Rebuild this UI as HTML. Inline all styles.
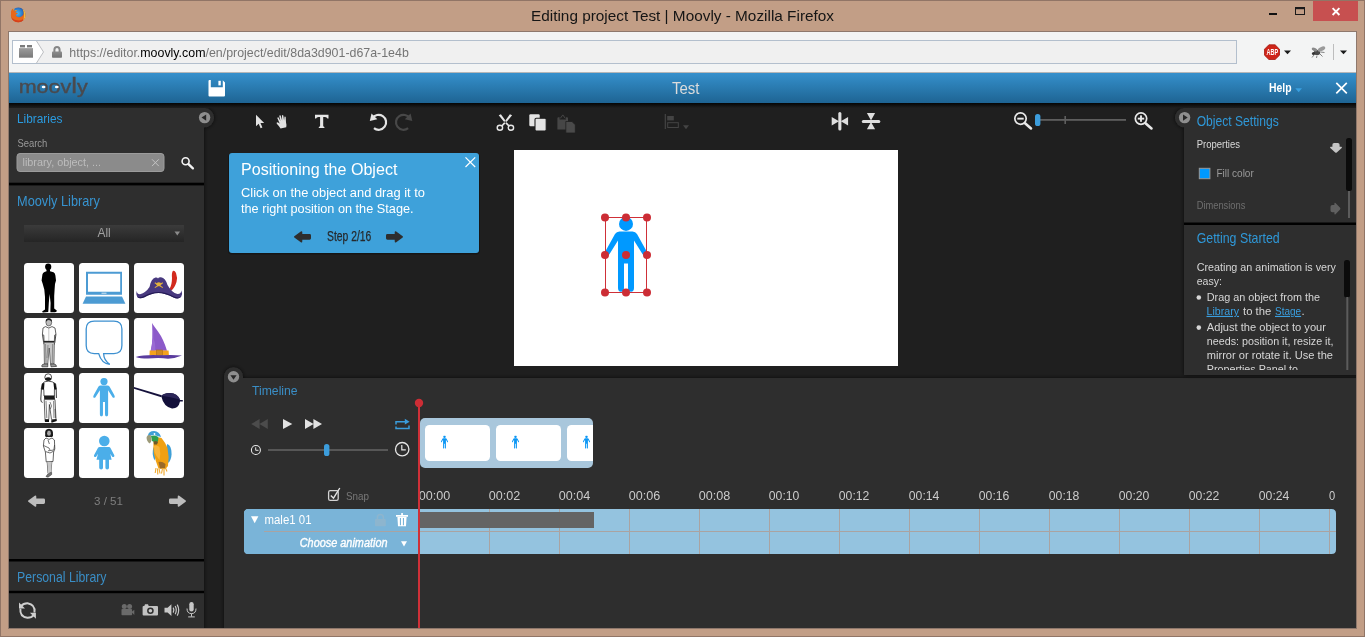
<!DOCTYPE html>
<html lang="en"><head><meta charset="utf-8"><title>Editing project Test | Moovly - Mozilla Firefox</title>
<style>
html,body{margin:0;padding:0;background:#c29e86;overflow:hidden}
svg{display:block;will-change:transform;font-family:'Liberation Sans', Arial, sans-serif}
text{white-space:pre}
</style></head><body>
<svg width="1365" height="637" viewBox="0 0 1365 637">
<defs>
<linearGradient id="gHead" x1="0" y1="0" x2="0" y2="1"><stop offset="0" stop-color="#3590cc"/><stop offset="1" stop-color="#1e6493"/></linearGradient>
<linearGradient id="gShade" x1="0" y1="0" x2="0" y2="1"><stop offset="0" stop-color="#050505"/><stop offset="1" stop-color="#1f1f1f"/></linearGradient>
<linearGradient id="gSel" x1="0" y1="0" x2="0" y2="1"><stop offset="0" stop-color="#3b3b3b"/><stop offset="1" stop-color="#252525"/></linearGradient>
<linearGradient id="gLego" x1="0" y1="0" x2="0" y2="1"><stop offset="0" stop-color="#9c9c9c"/><stop offset="1" stop-color="#787878"/></linearGradient>
<linearGradient id="gLock" x1="0" y1="0" x2="0" y2="1"><stop offset="0" stop-color="#8c8c8c"/><stop offset="1" stop-color="#737373"/></linearGradient>
<radialGradient id="gFx" cx="0.45" cy="0.4" r="0.6"><stop offset="0" stop-color="#49b6f0"/><stop offset="0.600" stop-color="#2a72c4"/><stop offset="1" stop-color="#17287c"/></radialGradient>
<filter id="sh" x="-10%" y="-10%" width="120%" height="120%"><feGaussianBlur in="SourceAlpha" stdDeviation="2.200"/><feComponentTransfer><feFuncA type="linear" slope="0.700"/></feComponentTransfer><feMerge><feMergeNode/><feMergeNode in="SourceGraphic"/></feMerge></filter>
<clipPath id="cMain"><rect x="9" y="103" width="1347" height="525"/></clipPath>
<clipPath id="cStrip"><rect x="420" y="418" width="173" height="50" rx="5"/></clipPath>
<clipPath id="cGS"><rect x="1184" y="225" width="172" height="145.100"/></clipPath>
<symbol id="man" viewBox="0 0 42 75"><circle cx="21" cy="6.8" r="7"/><path d="M14.5 14.5 H27.5 Q30.5 14.5 32 17 L42 35 Q42.6 37.4 40.8 38.2 Q39 39 37.6 37.2 L29 23.5 V71 Q29 74.6 26 74.6 Q23 74.6 23 71 V46.5 H19 V71 Q19 74.6 16 74.6 Q13 74.6 13 71 V23.5 L4.4 37.2 Q3 39 1.2 38.2 Q-0.6 37.4 0 35 L10 17 Q11.500 14.500 14.500 14.500Z"/></symbol>
</defs>
<rect x="0" y="0" width="1365" height="637" fill="#c29e86"/>
<rect x="0.5" y="0.5" width="1364" height="636" fill="none" stroke="#917566"/>
<rect x="8.500" y="31.500" width="1348" height="597" fill="none" stroke="#8e786c"/>
<text x="531" y="21" font-size="15" fill="#151515" textLength="303" lengthAdjust="spacingAndGlyphs" >Editing project Test | Moovly - Mozilla Firefox</text>
<g><circle cx="18.300" cy="14.800" r="7.200" fill="url(#gFx)"/><path d="M11 13.500 Q10.600 10 13.200 8.600 Q13 10.200 14.200 10.800 Q15.600 9.800 17 10.400 Q15.400 11.400 15.600 12.800 Q17.400 12.600 18 13.600 Q16 14.200 15.800 15.600 Q17 17.600 19.800 17.200 Q22.600 16.600 23.600 14 Q24.200 11.600 23.400 10 Q25.800 12.600 25.200 16.200 Q24.200 21.200 19 22.200 Q13.600 22.600 11.400 18 Q10.600 15.800 11 13.500Z" fill="#e8681a"/><path d="M11.400 17.800 Q13.400 22.400 18.800 22.200 Q24 21.400 25.200 16.400 Q23.600 20 19.400 20.400 Q14.600 20.800 11.400 17.800Z" fill="#d6401c"/><path d="M22.600 8.800 Q26.600 12 25.300 17.200 Q24.500 19.600 23 20.600 Q25.200 15 22.600 8.800Z" fill="#f6b93a"/><path d="M12.800 9.600 L14.400 9.300 L14.200 10.800Z M15.200 10 L17 10.300 L15.700 11.200Z" fill="#f6b02c"/></g>
<rect x="1269" y="13" width="8" height="2" fill="#111"/>
<rect x="1295.500" y="8.500" width="9" height="6" fill="none" stroke="#1a1a1a"/><rect x="1295" y="7" width="10" height="2.200" fill="#1a1a1a"/>
<rect x="1313" y="1" width="45" height="20" fill="#c75050"/>
<path d="M1332.600 8.200 L1339.400 15 M1339.400 8.200 L1332.600 15" stroke="#fff" stroke-width="1.900" fill="none"/>
<rect x="9" y="32" width="1347" height="41" fill="#f3f4f4"/>
<rect x="12.500" y="40.500" width="1224" height="23" fill="#f0f0f0" stroke="#b3bfcd"/>
<path d="M13 41 H36.500 L43.500 52 L36.500 63 H13Z" fill="#fefefe"/><path d="M36.500 41 L43.500 52 L36.500 63" fill="none" stroke="#bdbfc2"/>
<rect x="19" y="48.100" width="14" height="9.600" fill="url(#gLego)"/><rect x="20" y="45" width="5" height="2" fill="#7a7a7a"/><rect x="27" y="45" width="5" height="2" fill="#7a7a7a"/><rect x="20" y="47" width="5" height="1.100" fill="#c4c4c4"/><rect x="27" y="47" width="5" height="1.100" fill="#c4c4c4"/>
<path d="M54.400 52 V49.800 Q54.400 47 57 47 Q59.600 47 59.600 49.800 V52" fill="none" stroke="#868686" stroke-width="2"/><rect x="52" y="51.600" width="10" height="6.200" rx="0.800" fill="url(#gLock)"/>
<text x="69.300" y="56.600" font-size="13" fill="#757575" textLength="339.500" lengthAdjust="spacingAndGlyphs">https://editor.<tspan fill="#000">moovly.com</tspan>/en/project/edit/8da3d901-d67a-1e4b</text>
<path d="M1268.900 44.800 H1275.100 L1279.500 49.200 V55.200 L1275.100 59.500 H1268.900 L1264.500 55.200 V49.200Z" fill="#cf2519" stroke="#a31a12" stroke-width="0.800" stroke-linejoin="round"/>
<text x="1266.6" y="54.8" font-size="8.6" fill="#fff" textLength="11.6" lengthAdjust="spacingAndGlyphs" font-weight="bold" >ABP</text>
<path d="M1284 50.500 H1291 L1287.500 54.300Z" fill="#1a1a1a"/>
<g fill="#4a4a4a"><ellipse cx="1317" cy="52.500" rx="3.200" ry="2.600"/><ellipse cx="1321.500" cy="49" rx="4" ry="2" transform="rotate(-25 1321.500 49)" fill="#9a9a9a"/><ellipse cx="1314.500" cy="49.500" rx="3" ry="1.600" transform="rotate(25 1314.500 49.500)" fill="#8a8a8a"/><circle cx="1313.500" cy="53.500" r="1.600" fill="#333"/><path d="M1314 55 L1312 57.500 M1317 55.500 L1316.500 58 M1320 54 L1322.500 56.500 M1320.500 52 L1324.500 52.500" stroke="#666" stroke-width="0.800" fill="none"/></g>
<rect x="1333" y="44" width="1" height="16" fill="#bdbdbd"/>
<path d="M1340 50.500 H1347 L1343.500 54.300Z" fill="#1a1a1a"/>
<rect x="9" y="72" width="1347" height="1" fill="#b4b6b8"/>
<rect x="9" y="73" width="1347" height="30" fill="url(#gHead)"/>
<text x="18.700" y="92.600" font-size="18.500" fill="#4a4a4e" stroke="#4a4a4e" stroke-width="0.400" textLength="69" lengthAdjust="spacingAndGlyphs">moov<tspan font-size="22">l</tspan>y</text>
<ellipse cx="43.600" cy="87" rx="1.900" ry="1.300" fill="#fff"/><ellipse cx="56.800" cy="87" rx="1.900" ry="1.300" fill="#fff"/>
<path d="M209.500 80 H222.500 L225 82.500 V95.600 Q225 96.600 224 96.600 H209.500 Q208.500 96.600 208.500 95.600 V81 Q208.500 80 209.500 80Z M210.800 80 V87.200 H222.800 V80Z" fill="#fff" fill-rule="evenodd"/><rect x="218.400" y="80.800" width="2.400" height="4.600" fill="#fff"/>
<text x="672" y="93.8" font-size="16.8" fill="#dcdcdc" textLength="27.5" lengthAdjust="spacingAndGlyphs" >Test</text>
<text x="1269" y="92.3" font-size="13" fill="#fff" textLength="22.5" lengthAdjust="spacingAndGlyphs" font-weight="bold" >Help</text>
<path d="M1295.300 88.200 H1302 L1298.650 92.200Z" fill="#3aa0e0"/>
<path d="M1336.300 82.800 L1346.800 93.300 M1346.800 82.800 L1336.300 93.300" stroke="#fff" stroke-width="1.700" fill="none"/>
<rect x="9" y="103" width="1347" height="525" fill="#1f1f1f"/>
<g clip-path="url(#cMain)">
<g filter="url(#sh)"><rect x="224" y="378" width="1140" height="260" fill="#2f2f2f"/><circle cx="233.500" cy="376.900" r="9.600" fill="#2f2f2f"/></g>
<g filter="url(#sh)"><rect x="1184" y="100" width="180" height="275" fill="#2f2f2f"/><circle cx="1184.500" cy="117.700" r="9.600" fill="#2f2f2f"/></g>
<g filter="url(#sh)"><rect x="0" y="100" width="204" height="540" fill="#2f2f2f"/><circle cx="204.500" cy="117.700" r="9.600" fill="#2f2f2f"/></g>
</g>
<rect x="9" y="103" width="1347" height="5" fill="url(#gShade)"/>
<circle cx="204.600" cy="117.600" r="5.700" fill="#8e8e8e"/><path d="M206.200 114.500 V120.700 L201.500 117.600Z" fill="#262626"/>
<text x="17" y="123.2" font-size="13.4" fill="#2a9be0" textLength="45.4" lengthAdjust="spacingAndGlyphs" >Libraries</text>
<text x="17.4" y="147" font-size="11.5" fill="#9a9a9a" textLength="29.9" lengthAdjust="spacingAndGlyphs" >Search</text>
<rect x="17" y="153.500" width="147" height="18" rx="3" fill="#8b8b8b" stroke="#9c9c9c"/>
<text x="22.5" y="166" font-size="11.5" fill="#bcbcbc" textLength="78.5" lengthAdjust="spacingAndGlyphs" >library, object, ...</text>
<path d="M152 159.300 L158.800 166.100 M158.800 159.300 L152 166.100" stroke="#c4c4c4" stroke-width="1" fill="none"/>
<circle cx="185.600" cy="161.300" r="3.500" fill="none" stroke="#f4f4f4" stroke-width="1.600"/><path d="M188.500 164.200 L192.900 168.400" stroke="#f4f4f4" stroke-width="2.300" stroke-linecap="round"/>
<rect x="9" y="182.700" width="195" height="2.700" fill="#000"/>
<text x="17" y="206.3" font-size="14.2" fill="#3793cf" textLength="83" lengthAdjust="spacingAndGlyphs" >Moovly Library</text>
<rect x="24" y="225" width="160" height="17" fill="url(#gSel)"/>
<text x="97.5" y="237" font-size="13.2" fill="#a2a2a2" textLength="13.2" lengthAdjust="spacingAndGlyphs" >All</text>
<path d="M174.500 231.500 H180 L177.250 235.600Z" fill="#8c8c8c"/>
<g transform="translate(24 263)"><rect x="0" y="0" width="50" height="50" rx="3.500" fill="#fff"/><ellipse cx="24.200" cy="3.800" rx="3.100" ry="3.400" fill="#000"/><path d="M22.500 6.500 H26 V8.300 L29.500 9.200 Q31.200 10 31.400 12.500 L32 17.500 L31 21 L30.600 26.500 L30.200 33 L30.200 45.500 L32.800 47.600 Q33 49.200 31 49.200 H26.400 V47 L26.600 40 L25.600 31 L24.800 40 L24.400 47 L24.200 49 L19 49.600 Q17.600 49.200 18.400 48.200 L21 46.400 L21 34 L20.300 26.500 L18.600 20.500 L17.600 17.500 L18.400 11.500 Q18.800 9.600 20.500 9 L22.500 8.300Z" fill="#000"/></g>
<g transform="translate(79 263)"><rect x="0" y="0" width="50" height="50" rx="3.500" fill="#fff"/><path d="M7 8.700 H43 V31.800 H7Z M9 10.700 V28.800 H41.200 V10.700Z" fill="#4c9bd3" fill-rule="evenodd"/><rect x="22.500" y="29.700" width="5" height="1" fill="#d6e8f6"/><path d="M7 33.500 H43 L46.400 40.700 H3.600Z" fill="#4c9bd3"/></g>
<g transform="translate(134 263)"><rect x="0" y="0" width="50" height="50" rx="3.500" fill="#fff"/><path d="M35.400 26 Q38 22 38 15 Q37.500 10 38.800 8 Q40.500 7 42 10 Q43.800 15 42.500 19 Q40.500 25 37.500 27.500Z" fill="#d22a1e"/><path d="M2.800 27.500 Q2.600 31 6 31.300 Q12 29.500 15.500 24 Q17 15.500 21.500 14.500 Q23.500 14.200 24 15.600 Q24.600 14 27 14.200 Q31.500 15 33.500 22 Q37.500 29.500 43.500 31 Q47.200 31.200 47.500 27.300 Q48.800 31 47.200 33.800 Q44.500 36.800 39.500 34.600 Q31 30 24.500 30 Q17 30.200 10.500 34.200 Q5.500 36.500 3.200 34 Q1.600 31 2.800 27.500Z" fill="#48397f"/><path d="M10.500 34.200 Q17 30.200 24.500 30 Q31 30 39.500 34.600 Q44.500 36.800 47.200 33.800 Q44.500 35.300 40 33.400 Q31.500 29 24.500 29 Q17 29.200 10 33 Q6 35 3.200 34 Q5.500 36.500 10.500 34.200Z" fill="#241a55"/><ellipse cx="24.800" cy="21.200" rx="2.400" ry="2" fill="#e2b23c"/><path d="M20.800 19.800 L28.800 24.600 M28.800 19.800 L20.800 24.600" stroke="#e2b23c" stroke-width="1.100"/></g>
<g transform="translate(24 318)"><rect x="0" y="0" width="50" height="50" rx="3.500" fill="#fff"/><ellipse cx="24.800" cy="4.300" rx="2.900" ry="3.700" fill="#bdbdbd" stroke="#333" stroke-width="0.600"/><path d="M21.800 3.800 Q21.400 0.300 24.800 0.300 Q28.200 0.300 27.800 3.800 Q26.600 2.100 24.800 2.100 Q23 2.100 21.800 3.800Z" fill="#1c1c1c"/><path d="M21.500 8.600 L24.800 10 L28 8.600 L31 10 L32 16.500 L30.600 17.200 L30.400 23.300 H20 L19.800 17.200 L18.400 16.500 L19 10Z" fill="#fdfdfd" stroke="#222" stroke-width="0.700"/><path d="M18.500 16.500 L19.600 24.500 L20.600 27 M31.900 16.500 L30.800 24.500 L29.800 27" fill="none" stroke="#444" stroke-width="1"/><path d="M24.800 10 V23" stroke="#777" stroke-width="0.400"/><rect x="20" y="23" width="10.400" height="1.400" fill="#222"/><path d="M20 24.400 H30.400 L30 46 H26.600 L25.200 30 L23.800 46 H20.400Z" fill="#c6c6c6" stroke="#333" stroke-width="0.600"/><path d="M21.500 26 L22 45 M28.600 26 L28.300 45 M24 27 L23 40" stroke="#555" stroke-width="0.500" fill="none"/><path d="M17.600 48 Q18 46 20.400 46 H23.800 V48.800 H18Z M26.600 46 H30 Q32.400 46.400 32.600 48.400 L27 48.800Z" fill="#999" stroke="#222" stroke-width="0.600"/></g>
<g transform="translate(79 318)"><rect x="0" y="0" width="50" height="50" rx="3.500" fill="#fff"/><path d="M15.200 3.100 H34.900 Q42.900 3.100 42.900 11.100 V27.600 Q42.900 35.600 34.900 35.600 H24.600 Q24.800 42.500 30.800 46.400 Q22.500 45.500 19.700 35.600 H15.200 Q7.200 35.600 7.200 27.600 V11.100 Q7.200 3.100 15.200 3.100Z" fill="none" stroke="#3d90d0" stroke-width="1.300"/></g>
<g transform="translate(134 318)"><rect x="0" y="0" width="50" height="50" rx="3.500" fill="#fff"/><path d="M18 5.100 Q19 7 24 13.500 Q29.500 21 33 32.800 H16.700 Q19.600 21 18 5.100Z" fill="#8c5ac9"/><path d="M18 5.100 Q20 14 19.500 21 Q22 26 21 32.800 H16.700 Q19.600 21 18 5.100Z" fill="#9a6ad4"/><path d="M15.700 32.600 H34.600 L34.900 37.400 H15.500Z" fill="#f4a21c"/><rect x="22.500" y="32" width="6" height="5.600" fill="#d08a22" stroke="#b06e18" stroke-width="0.600"/><path d="M1.700 39 Q10 36.600 25 37.200 Q40 36.600 48 37.400 Q42 40 34 40.700 Q25 39.400 14 40.600 Q6 40.600 1.700 39Z" fill="#5a3c9e"/></g>
<g transform="translate(24 373)"><rect x="0" y="0" width="50" height="50" rx="3.500" fill="#fff"/><circle cx="24.200" cy="4.200" r="3.400" fill="#fff" stroke="#222" stroke-width="0.800"/><path d="M21 5.400 Q24.200 3 27.400 5.400 L27 7 Q24.200 8.400 21.400 7Z" fill="#1a1a1a"/><path d="M20.500 8.800 Q24.200 7.600 28.200 8.800 L31.600 10.800 L32.400 16 L30.400 16.400 L30.400 23 H20 L19.800 16.400 L17.200 16 L18.200 10.800Z" fill="#fff" stroke="#111" stroke-width="0.700"/><path d="M18.200 10.800 L20.500 9.600 L20 16.400 L17.200 16Z M31.600 10.800 L29.400 9.600 L30.200 16.400 L32.400 16Z" fill="#111"/><path d="M17.400 16 L16.800 26 Q16.600 29.400 18.600 29.400 M32.200 16 L32.400 25" fill="none" stroke="#222" stroke-width="0.900"/><path d="M20 22.800 H30.600 L31 26.600 H20.200Z" fill="#1a1a1a"/><path d="M20.200 26.600 H31 L32 46.500 H27.500 L25.400 31.500 L24.800 46.500 H21Z" fill="#fafafa" stroke="#222" stroke-width="0.700"/><path d="M22 28 L22.800 45 M26 29 L27.500 33 L26.400 36 M29.600 28 L30 45 M31 36 L31.600 45" stroke="#333" stroke-width="0.600" fill="none"/><path d="M20.600 46.500 H25 V49 H21Z M27 47.500 L32.600 46 L32.800 48 L27.600 49.800Z" fill="#111"/></g>
<g transform="translate(79 373)"><rect x="0" y="0" width="50" height="50" rx="3.500" fill="#fff"/><use href="#man" x="14.200" y="5.100" width="21.600" height="38.570" fill="#4baee9"/></g>
<g transform="translate(134 373)"><rect x="0" y="0" width="50" height="50" rx="3.500" fill="#fff"/><path d="M0 14 L27.800 22.300 L27.400 24.300 L0 15.800Z" fill="#15113c"/><path d="M27.300 23.200 Q28.500 20.400 36 20 Q43.500 20.400 46.200 27 L48.800 27 V28.600 L46 28.600 Q44.500 35.800 38 35.600 Q29.500 33.500 27.300 23.200Z" fill="#13103a"/><path d="M27.600 22.800 Q29 20.400 36 20 Q43.500 20.400 46 26.600 Q36 24 27.600 22.800Z" fill="#2c2658"/></g>
<g transform="translate(24 428)"><rect x="0" y="0" width="50" height="50" rx="3.500" fill="#fff"/><path d="M21.200 6.500 Q20.400 1 25 0.800 Q29.400 1 29 6.500 Q29.600 8.500 27.800 9 L22.200 9 Q20.400 8.600 21.200 6.500Z" fill="#1b1b1b"/><ellipse cx="25" cy="5.200" rx="1.900" ry="2.600" fill="#a8a8a8"/><path d="M22 10 L25 11.400 L28 10 L30.400 12 L30.800 21 L29.600 24 L29 33.500 L22.200 33.800 L21.400 24 L19.400 18 L20 12Z" fill="#fff" stroke="#222" stroke-width="0.700"/><path d="M19.600 17.500 L25 20 L26 22 M30.600 17 L29.800 22 L24 22.800 M21.600 23.600 L26 25 L29.600 23.200 M24 12 L25.400 16" stroke="#333" stroke-width="0.700" fill="none"/><path d="M23.200 33.800 L24 45.500 M27.800 33.600 L27 44 M25.600 34 L25.600 44" stroke="#444" stroke-width="0.800" fill="none"/><path d="M23.400 34 H27.600 L27 45 H24.200Z" fill="#c8c8c8"/><path d="M22 48.500 Q23 46.400 25.600 45 L27.600 44.200 L27.600 46.600 L24 49.200Z" fill="#777" stroke="#222" stroke-width="0.500"/></g>
<g transform="translate(79 428)"><rect x="0" y="0" width="50" height="50" rx="3.500" fill="#fff"/><circle cx="25.300" cy="13" r="5.300" fill="#4baee9"/><path d="M20.600 18.900 H30 Q31 19 31.500 20 L35.300 27.300 Q35.700 28.500 34.700 29 Q33.700 29.400 33 28.400 L31.300 25.800 L32.600 31.800 H30 V39.700 Q30 41.500 28.200 41.500 Q26.400 41.500 26.400 39.700 V31.800 H24 V39.700 Q24 41.500 22.200 41.500 Q20.200 41.500 20.200 39.700 V31.800 H17.500 L19 25.800 L17.300 28.400 Q16.600 29.400 15.600 29 Q14.600 28.500 15 27.300 L18.900 20 Q19.500 19 20.600 18.900Z" fill="#4baee9"/></g>
<g transform="translate(134 428)"><rect x="0" y="0" width="50" height="50" rx="3.500" fill="#fff"/><path d="M33 16 Q37.500 17 37.600 26 Q37.200 32 34.500 35 L32 28Z" fill="#3f9fd6"/><path d="M19.500 19 Q17.400 26 20.500 32.500 L22.500 26Z" fill="#3f9fd6"/><path d="M13.800 8 Q14.500 3 20 3 Q25.500 3.600 27 9 L20 7Z" fill="#3f9fd6"/><path d="M19.500 14 Q24 8 27.500 10 Q31 14 33.500 20 Q35.500 29 34 38 L31.500 41 L24.500 40.500 Q21.500 33 20 26 Q19 19 19.500 14Z" fill="#f0a012"/><path d="M20 18 Q23 16.500 25.500 19 Q27 26 25.500 32 Q22 28 20.500 24Z" fill="#f7b43a"/><path d="M24.500 34 Q28 33 31.500 36 L31 40 L26 40.600Z" fill="#9a6a28"/><path d="M17 8 Q21 6.500 24.500 9 L24 13.500 Q20.500 15 18 13Z" fill="#2f9e4e"/><path d="M19.500 13.500 Q22 12.500 24 14 L23 16.600 L20 16.400Z" fill="#6b5a2a"/><path d="M12.600 9 Q13.200 6.600 16.600 7 L17.600 12 Q17 15 15.600 15.400 Q12.400 13.500 12.600 9Z" fill="#9c9a78"/><circle cx="20.500" cy="6" r="0.900" fill="#fff"/><path d="M22 40 L21.200 45 M23.500 40.500 L23.800 46.500 M25 40.500 L26 45.500 M28.500 40.500 L27.500 45.500 M30 40.500 L30 47.500 M31.500 40 L33 43.500" stroke="#f0a82a" stroke-width="1.100" fill="none"/></g>
<path transform="translate(28 495.5) scale(1.0)" d="M0.300 5.100 L6.800 0.300 Q8.300 -0.400 8.300 1.300 V2.900 H15.600 Q17 2.900 17 4.300 V7.100 Q17 8.500 15.600 8.500 H8.300 V10.100 Q8.300 11.800 6.800 11.100 L0.300 6.300 Q-0.300 5.700 0.300 5.100Z" fill="#bdbdbd"/>
<path transform="translate(186.0 495.5) scale(-1.0 1.0)" d="M0.300 5.100 L6.800 0.300 Q8.300 -0.400 8.300 1.300 V2.900 H15.600 Q17 2.900 17 4.300 V7.100 Q17 8.500 15.600 8.500 H8.300 V10.100 Q8.300 11.800 6.800 11.100 L0.300 6.300 Q-0.300 5.700 0.300 5.100Z" fill="#bdbdbd"/>
<text x="94" y="504.7" font-size="11" fill="#7e7e7e" textLength="29" lengthAdjust="spacingAndGlyphs" >3 / 51</text>
<rect x="9" y="559" width="195" height="2.500" fill="#000"/>
<text x="17" y="582" font-size="14" fill="#3a8ec6" textLength="89.5" lengthAdjust="spacingAndGlyphs" >Personal Library</text>
<rect x="9" y="590.800" width="195" height="2.400" fill="#000"/>
<g transform="translate(55 0) scale(-1 1)"><g fill="none" stroke="#cfcfcf" stroke-width="1.900"><path d="M20.500 612.500 Q19.600 604.500 27.500 603.300 Q31.500 603.200 34 606.200"/><path d="M34.600 608.600 Q35.500 616.600 27.600 617.800 Q23.600 617.900 21.100 614.900"/></g><path d="M36 602.400 V608.400 H30Z M19.100 618.700 V612.700 H25.100Z" fill="#cfcfcf"/></g>
<g fill="#6a6a6a"><circle cx="124.300" cy="606.600" r="2.500"/><circle cx="129.600" cy="606.600" r="2.500"/><rect x="121.500" y="609" width="10.600" height="6.300" rx="0.800"/><path d="M131.500 612 L134.300 609.700 V615 Z"/></g>
<path d="M144.300 606 L145 604.200 H148 L148.700 606 H157 Q158 606 158 607 V614.600 Q158 615.600 157 615.600 H143.600 Q142.600 615.600 142.600 614.600 V607 Q142.600 606 143.600 606Z" fill="#c2c2c2"/><circle cx="150.400" cy="610.800" r="3.300" fill="#2f2f2f"/><circle cx="150.400" cy="610.800" r="1.800" fill="#c8c8c8"/>
<path d="M164.500 607.700 H167.600 L171.400 604.200 V616 L167.600 612.500 H164.500Z" fill="#c8c8c8"/><path d="M173.200 607.600 Q174.600 610.100 173.200 612.600 M175.200 606 Q177.400 610.100 175.200 614.200 M177.200 604.600 Q180.200 610.100 177.200 615.600" fill="none" stroke="#c8c8c8" stroke-width="1.200"/>
<rect x="189.300" y="602" width="4.400" height="9.500" rx="2.200" fill="#c8c8c8"/><path d="M187 608.500 Q187 613.600 191.500 613.600 Q196 613.600 196 608.500 M191.500 613.600 V616.600 M188.200 616.900 H194.800" fill="none" stroke="#c8c8c8" stroke-width="1"/>
<path d="M256 114.800 V126.300 L258.700 123.800 L260.600 128.300 L262.400 127.500 L260.500 123.100 H264.200Z" fill="#e2e2e2"/>
<path transform="rotate(-13 281.500 122) translate(281.500 0) scale(0.900 1) translate(-281.500 0)" d="M278.800 128.200 Q277.600 124.800 276 122.600 Q275.600 121.400 276.800 121.400 Q278.200 121.800 279.200 123.400 L278 117.400 Q278.200 116.200 279.300 116.600 L280.600 120.800 L280.600 115.600 Q281.300 114.600 282.200 115.600 L282.600 120.600 L283.600 115.800 Q284.500 115 285.100 116 L284.700 121 L286 117.600 Q286.900 117 287.300 118 L286.300 123.400 Q286.500 126.400 285.300 128.200Z" fill="#e2e2e2"/>
<path d="M315 114.800 H328.500 V118.500 H327.400 Q327 117 325 117 H323.200 V126 Q323.200 126.800 324.400 126.900 V128 H318.800 V126.900 Q320.100 126.800 320.100 126 V117 H318.500 Q316.500 117 316.100 118.500 H315Z" fill="#e6e6e6"/>
<g><path d="M372.24 118.33 A7.5 7.5 0 1 1 373.98 128.21" fill="none" stroke="#e4e4e4" stroke-width="2.200"/><path d="M371.500 113.600 L369.800 121.100 L377.300 119.300Z" fill="#e4e4e4"/></g>
<g transform="translate(782.100 0) scale(-1 1)"><path d="M372.24 118.33 A7.5 7.5 0 1 1 373.98 128.21" fill="none" stroke="#484848" stroke-width="2.200"/><path d="M371.500 113.600 L369.800 121.100 L377.300 119.300Z" fill="#484848"/></g>
<path d="M498.700 115.200 L500.900 114.200 L506.700 122.300 L509.600 125.600 L508.400 126.500 L505.400 123.500 Z M512.100 115.200 L509.900 114.200 L504.100 122.300 L501.200 125.600 L502.400 126.500 L505.400 123.500 Z" fill="#e6e6e6"/><ellipse cx="499.900" cy="127.700" rx="2.700" ry="2.500" fill="none" stroke="#e6e6e6" stroke-width="1.400"/><ellipse cx="510.900" cy="127.700" rx="2.700" ry="2.500" fill="none" stroke="#e6e6e6" stroke-width="1.400"/><circle cx="505.400" cy="121.700" r="0.700" fill="#777"/>
<rect x="529.300" y="114.300" width="10.400" height="12" rx="1.200" fill="#e4e4e4"/><rect x="535" y="118.200" width="11.200" height="12.800" rx="1.300" fill="#e4e4e4" stroke="#1f1f1f" stroke-width="1.100"/>
<path d="M557.400 118.200 Q557.400 117.200 558.400 117.200 H559.600 V119.400 H566 V117.200 H567 Q568 117.200 568 118.200 V129.400 H557.400Z" fill="#464646"/><path d="M560.300 118.400 L562.800 114.900 L565.300 118.400" fill="none" stroke="#464646" stroke-width="1"/><path d="M565.800 121.500 H572 L575.300 124.800 V133 H565.800Z" fill="#4a4a4a" stroke="#1f1f1f" stroke-width="0.800"/>
<rect x="664.700" y="114" width="1.200" height="15" fill="#444"/><rect x="667.200" y="116" width="6.600" height="4.400" fill="#444"/><rect x="667.700" y="122.700" width="10.600" height="4.800" fill="none" stroke="#444" stroke-width="1"/><path d="M683 125.300 H689 L686 129.200Z" fill="#444"/>
<rect x="838.300" y="112" width="3.100" height="18.500" rx="1.500" fill="#dedede"/><path d="M831.700 117 L839 121.200 L831.700 125.400Z M848.100 117 L840.800 121.200 L848.100 125.400Z" fill="#dedede"/>
<rect x="861.800" y="119.900" width="18.500" height="3" rx="1.500" fill="#dedede"/><path d="M866.900 113 L871 120.600 L875.100 113Z M866.900 129.200 L871 122 L875.100 129.200Z" fill="#dedede"/>
<circle cx="1020.500" cy="118.600" r="5.700" fill="none" stroke="#e8e8e8" stroke-width="1.700"/><path d="M1025 123.200 L1031 128.400" stroke="#e8e8e8" stroke-width="2.600" stroke-linecap="round"/><rect x="1017.300" y="117.700" width="6.400" height="1.900" fill="#e8e8e8"/>
<rect x="1038" y="119" width="88" height="1.800" fill="#5e5e5e"/><rect x="1064.400" y="116" width="1.600" height="8" fill="#5e5e5e"/>
<rect x="1035" y="114" width="5.400" height="12" rx="2.600" fill="#3c9ddc"/>
<circle cx="1141" cy="118.600" r="5.700" fill="none" stroke="#e8e8e8" stroke-width="1.700"/><path d="M1145.500 123.200 L1151.500 128.400" stroke="#e8e8e8" stroke-width="2.600" stroke-linecap="round"/><rect x="1137.800" y="117.700" width="6.400" height="1.900" fill="#e8e8e8"/><rect x="1140.050" y="115.400" width="1.900" height="6.400" fill="#e8e8e8"/>
<rect x="228" y="153" width="252" height="101.500" rx="4" fill="#101010" opacity="0.600"/>
<rect x="229" y="153" width="250" height="100" rx="3" fill="#3ea1da"/>
<path d="M465.500 157.300 L475.200 167 M475.200 157.300 L465.500 167" stroke="#fff" stroke-width="1.200" fill="none"/>
<text x="241" y="174.8" font-size="17" fill="#fff" textLength="156.4" lengthAdjust="spacingAndGlyphs" >Positioning the Object</text>
<text x="241" y="196.7" font-size="13.6" fill="#fff" textLength="184" lengthAdjust="spacingAndGlyphs" >Click on the object and drag it to</text>
<text x="241" y="212.9" font-size="13.6" fill="#fff" textLength="172.6" lengthAdjust="spacingAndGlyphs" >the right position on the Stage.</text>
<path transform="translate(294 231.2) scale(1.0)" d="M0.300 5.100 L6.800 0.300 Q8.300 -0.400 8.300 1.300 V2.900 H15.600 Q17 2.900 17 4.300 V7.100 Q17 8.500 15.600 8.500 H8.300 V10.100 Q8.300 11.800 6.800 11.100 L0.300 6.300 Q-0.300 5.700 0.300 5.100Z" fill="#2e2e2e"/>
<path transform="translate(403.0 231.2) scale(-1.0 1.0)" d="M0.300 5.100 L6.800 0.300 Q8.300 -0.400 8.300 1.300 V2.900 H15.600 Q17 2.900 17 4.300 V7.100 Q17 8.500 15.600 8.500 H8.300 V10.100 Q8.300 11.800 6.800 11.100 L0.300 6.300 Q-0.300 5.700 0.300 5.100Z" fill="#2e2e2e"/>
<text x="327" y="241" font-size="15" fill="#26292c" textLength="44.3" lengthAdjust="spacingAndGlyphs" stroke="#26292c" stroke-width="0.250">Step 2/16</text>
<rect x="514" y="150" width="384" height="216" fill="#fff"/>
<use href="#man" x="605" y="217.100" width="42" height="75" fill="#0099ff"/>
<rect x="605.500" y="217.500" width="41" height="75" fill="none" stroke="#cf3038" stroke-width="1"/>
<circle cx="605" cy="217.5" r="4" fill="#cc2d35"/>
<circle cx="605" cy="255" r="4" fill="#cc2d35"/>
<circle cx="605" cy="292.5" r="4" fill="#cc2d35"/>
<circle cx="626" cy="217.5" r="4" fill="#cc2d35"/>
<circle cx="626" cy="255" r="4" fill="#cc2d35"/>
<circle cx="626" cy="292.5" r="4" fill="#cc2d35"/>
<circle cx="647" cy="217.5" r="4" fill="#cc2d35"/>
<circle cx="647" cy="255" r="4" fill="#cc2d35"/>
<circle cx="647" cy="292.5" r="4" fill="#cc2d35"/>
<circle cx="1184.600" cy="117.600" r="5.700" fill="#8e8e8e"/><path d="M1183 114.500 V120.700 L1187.700 117.600Z" fill="#262626"/>
<text x="1196.7" y="126.4" font-size="14.2" fill="#2f98d8" textLength="82.1" lengthAdjust="spacingAndGlyphs" >Object Settings</text>
<text x="1196.7" y="148.3" font-size="11.3" fill="#dadada" textLength="43.3" lengthAdjust="spacingAndGlyphs" >Properties</text>
<path d="M1334.200 142.900 H1337.800 Q1339.600 142.900 1339.600 144.700 V146.800 H1341.200 Q1342.400 146.900 1341.700 147.900 L1336.800 152.500 Q1336 153.100 1335.200 152.500 L1330.300 147.900 Q1329.600 146.900 1330.800 146.800 H1332.400 V144.700 Q1332.400 142.900 1334.200 142.900Z" fill="#c4c4c4"/>
<rect x="1346" y="138" width="6" height="53" rx="2.500" fill="#0b0b0b"/><rect x="1348" y="191" width="2" height="27" fill="#5c5c5c"/>
<rect x="1199.300" y="168.300" width="10.600" height="10.400" fill="#0099ff" stroke="#9a9a9a" stroke-width="1"/>
<text x="1216.4" y="177.3" font-size="11.5" fill="#9a9a9a" textLength="37.4" lengthAdjust="spacingAndGlyphs" >Fill color</text>
<text x="1196.7" y="209" font-size="11.3" fill="#6e6e6e" textLength="48.7" lengthAdjust="spacingAndGlyphs" >Dimensions</text>
<path transform="translate(1330.500 214.600) rotate(-90)" d="M4.200 0 H7.800 Q9.600 0 9.600 1.800 V3.900 H11.200 Q12.400 4 11.700 5 L6.800 9.600 Q6 10.200 5.200 9.600 L0.300 5 Q-0.400 4 0.800 3.900 H2.400 V1.800 Q2.400 0 4.200 0Z" fill="#606060"/>
<rect x="1184" y="222.500" width="172" height="2.500" fill="#000"/>
<text x="1196.7" y="242.8" font-size="14.2" fill="#2f98d8" textLength="83.0" lengthAdjust="spacingAndGlyphs" >Getting Started</text>
<g clip-path="url(#cGS)">
<text x="1196.7" y="271" font-size="11.4" fill="#d6d6d6" textLength="139.3" lengthAdjust="spacingAndGlyphs" >Creating an animation is very</text>
<text x="1196.7" y="284.7" font-size="11.4" fill="#d6d6d6" textLength="25.3" lengthAdjust="spacingAndGlyphs" >easy:</text>
<circle cx="1198.800" cy="297.500" r="2.300" fill="#d6d6d6"/>
<text x="1206.8" y="300.8" font-size="11.4" fill="#d6d6d6" textLength="113.2" lengthAdjust="spacingAndGlyphs" >Drag an object from the</text>
<text x="1206.5" y="314.9" font-size="11.4" fill="#3a9fe0" textLength="32.5" lengthAdjust="spacingAndGlyphs" text-decoration="underline">Library</text>
<text x="1243.1" y="314.9" font-size="11.4" fill="#d6d6d6" textLength="28.2" lengthAdjust="spacingAndGlyphs" >to the</text>
<text x="1275" y="314.9" font-size="11.4" fill="#3a9fe0" textLength="26.1" lengthAdjust="spacingAndGlyphs" text-decoration="underline">Stage</text>
<text x="1301.5" y="314.9" font-size="11.4" fill="#d6d6d6" >.</text>
<circle cx="1198.800" cy="327.600" r="2.300" fill="#d6d6d6"/>
<text x="1206.8" y="331" font-size="11.4" fill="#d6d6d6" textLength="119.2" lengthAdjust="spacingAndGlyphs" >Adjust the object to your</text>
<text x="1206.8" y="345" font-size="11.4" fill="#d6d6d6" textLength="126.7" lengthAdjust="spacingAndGlyphs" >needs: position it, resize it,</text>
<text x="1206.8" y="358.8" font-size="11.4" fill="#d6d6d6" textLength="126.2" lengthAdjust="spacingAndGlyphs" >mirror or rotate it. Use the</text>
<text x="1206.8" y="373.4" font-size="11.4" fill="#d6d6d6" textLength="91.2" lengthAdjust="spacingAndGlyphs" >Properties Panel to</text>
</g>
<rect x="1344" y="260" width="6" height="37.500" rx="2.500" fill="#0b0b0b"/><rect x="1346.300" y="297" width="2" height="73" fill="#5c5c5c"/>
<circle cx="233.500" cy="376.700" r="5.700" fill="#8e8e8e"/><path d="M230.400 375.200 H236.600 L233.500 379.800Z" fill="#262626"/>
<text x="252" y="394.8" font-size="13.7" fill="#3a8ec6" textLength="45.6" lengthAdjust="spacingAndGlyphs" >Timeline</text>
<path d="M251.200 424 L259.600 419 V429Z M259.400 424 L267.800 419 V429Z" fill="#4c4c4c"/>
<path d="M283 419 L292.300 424 L283 429Z" fill="#e2e2e2"/>
<path d="M305 419 L313.600 424 L305 429Z M313.400 419 L322 424 L313.400 429Z" fill="#e2e2e2"/>
<path d="M396 424.500 V421.700 H405.300 M409 425.500 V428.400 H396 V426.500" fill="none" stroke="#3a9ddc" stroke-width="1.500"/><path d="M404.800 418.800 L409.600 421.700 L404.800 424.600Z" fill="#3a9ddc"/>
<circle cx="255.900" cy="450" r="4.500" fill="none" stroke="#e6e6e6" stroke-width="1.100"/><path d="M255.700 447.300 V450.300 H258.500" fill="none" stroke="#e6e6e6" stroke-width="1"/>
<rect x="268" y="449.100" width="120" height="1.800" fill="#5c5c5c"/>
<rect x="324" y="444" width="5.400" height="12" rx="2.600" fill="#3c9ddc"/>
<circle cx="402.200" cy="449.200" r="6.700" fill="none" stroke="#e6e6e6" stroke-width="1.300"/><path d="M401.800 445 V449.800 H405.800" fill="none" stroke="#e6e6e6" stroke-width="1.200"/>
<g clip-path="url(#cStrip)"><rect x="420" y="418" width="173" height="50" fill="#a9c7dc"/>
<rect x="425" y="425" width="65" height="36" rx="4.500" fill="#fff"/>
<use href="#man" x="440.8" y="435.600" width="7.400" height="13.200" fill="#0a96f5"/>
<rect x="496" y="425" width="65" height="36" rx="4.500" fill="#fff"/>
<use href="#man" x="511.8" y="435.600" width="7.400" height="13.200" fill="#0a96f5"/>
<rect x="567" y="425" width="65" height="36" rx="4.500" fill="#fff"/>
<use href="#man" x="582.8" y="435.600" width="7.400" height="13.200" fill="#0a96f5"/>
</g>
<rect x="328.600" y="490.700" width="9.600" height="9.600" rx="1.600" fill="none" stroke="#d2d2d2" stroke-width="1.300"/><path d="M330.800 495.600 L333.500 498.200 L339.800 488" fill="none" stroke="#e4e4e4" stroke-width="1.400"/>
<text x="346" y="500" font-size="11" fill="#787878" textLength="23" lengthAdjust="spacingAndGlyphs" >Snap</text>
<text x="418.8" y="500" font-size="12.2" fill="#cbcbcb" textLength="31.5" lengthAdjust="spacingAndGlyphs" >00:00</text>
<text x="488.8" y="500" font-size="12.2" fill="#cbcbcb" textLength="31.5" lengthAdjust="spacingAndGlyphs" >00:02</text>
<text x="558.8" y="500" font-size="12.2" fill="#cbcbcb" textLength="31.5" lengthAdjust="spacingAndGlyphs" >00:04</text>
<text x="628.8" y="500" font-size="12.2" fill="#cbcbcb" textLength="31.5" lengthAdjust="spacingAndGlyphs" >00:06</text>
<text x="698.8" y="500" font-size="12.2" fill="#cbcbcb" textLength="31.5" lengthAdjust="spacingAndGlyphs" >00:08</text>
<text x="768.8" y="500" font-size="12.2" fill="#cbcbcb" textLength="30.6" lengthAdjust="spacingAndGlyphs" >00:10</text>
<text x="838.8" y="500" font-size="12.2" fill="#cbcbcb" textLength="30.6" lengthAdjust="spacingAndGlyphs" >00:12</text>
<text x="908.8" y="500" font-size="12.2" fill="#cbcbcb" textLength="30.6" lengthAdjust="spacingAndGlyphs" >00:14</text>
<text x="978.8" y="500" font-size="12.2" fill="#cbcbcb" textLength="30.6" lengthAdjust="spacingAndGlyphs" >00:16</text>
<text x="1048.8" y="500" font-size="12.2" fill="#cbcbcb" textLength="30.6" lengthAdjust="spacingAndGlyphs" >00:18</text>
<text x="1118.8" y="500" font-size="12.2" fill="#cbcbcb" textLength="30.6" lengthAdjust="spacingAndGlyphs" >00:20</text>
<text x="1188.8" y="500" font-size="12.2" fill="#cbcbcb" textLength="30.6" lengthAdjust="spacingAndGlyphs" >00:22</text>
<text x="1258.8" y="500" font-size="12.2" fill="#cbcbcb" textLength="30.6" lengthAdjust="spacingAndGlyphs" >00:24</text>
<text x="1329" y="500" font-size="12.2" fill="#cdcdcd" textLength="6.2" lengthAdjust="spacingAndGlyphs" >0</text>
<path d="M248.500 509 H1331.500 Q1336 509 1336 513.500 V549.500 Q1336 554 1331.500 554 H248.500 Q244 554 244 549.500 V513.500 Q244 509 248.500 509Z" fill="#94c3df"/>
<path d="M248.500 509 H418 V554 H248.500 Q244 554 244 549.500 V513.500 Q244 509 248.500 509Z" fill="#7ab4d8"/>
<rect x="489" y="509" width="1" height="45" fill="#aaa3a1"/>
<rect x="559" y="509" width="1" height="45" fill="#aaa3a1"/>
<rect x="629" y="509" width="1" height="45" fill="#aaa3a1"/>
<rect x="699" y="509" width="1" height="45" fill="#aaa3a1"/>
<rect x="769" y="509" width="1" height="45" fill="#aaa3a1"/>
<rect x="839" y="509" width="1" height="45" fill="#aaa3a1"/>
<rect x="909" y="509" width="1" height="45" fill="#aaa3a1"/>
<rect x="979" y="509" width="1" height="45" fill="#aaa3a1"/>
<rect x="1049" y="509" width="1" height="45" fill="#aaa3a1"/>
<rect x="1119" y="509" width="1" height="45" fill="#aaa3a1"/>
<rect x="1189" y="509" width="1" height="45" fill="#aaa3a1"/>
<rect x="1259" y="509" width="1" height="45" fill="#aaa3a1"/>
<rect x="1329" y="509" width="1" height="45" fill="#aaa3a1"/>
<rect x="264" y="531" width="1072" height="1" fill="#aaa3a1"/>
<rect x="420" y="512" width="174" height="16" fill="#646464"/>
<path d="M251 516.300 H258.400 L254.700 523.300Z" fill="#fff"/>
<text x="264.5" y="523.6" font-size="13" fill="#fff" textLength="47.0" lengthAdjust="spacingAndGlyphs" >male1 01</text>
<g opacity="0.550"><path d="M377.400 519.500 V517.600 Q377.400 514.600 380.400 514.600 Q383.400 514.600 383.400 517.600 V519.500" fill="none" stroke="#9db6c6" stroke-width="1.500"/><rect x="375" y="519" width="10.800" height="7.200" rx="1" fill="#9db6c6"/></g>
<path d="M396 515 H408 V516.700 H396Z M401.200 513 H402.900 V515.200 H401.200Z" fill="#fff"/><path d="M397.400 517 H406.600 L406 526.200 H398Z M399.900 518 V525.200 H401 V518Z M402.900 518 V525.200 H404 V518Z" fill="#fff" fill-rule="evenodd"/>
<text x="299.7" y="547" font-size="12" fill="#fff" textLength="87.9" lengthAdjust="spacingAndGlyphs" font-style="italic" stroke="#fff" stroke-width="0.350">Choose animation</text>
<path d="M401 541.200 H407 L404 546.400Z" fill="#fff"/>
<rect x="418" y="403" width="2" height="225" fill="#cf3038"/><circle cx="419" cy="403" r="4.200" fill="#cc2d35"/>
</svg>
</body></html>
